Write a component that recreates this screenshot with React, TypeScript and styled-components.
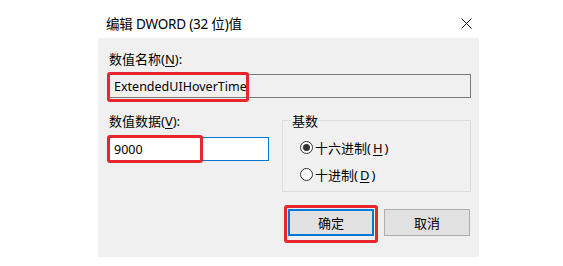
import React from "react";
import styled, { createGlobalStyle } from "styled-components";

const Global = createGlobalStyle`
  html, body { margin: 0; padding: 0; background: #ffffff; }
  body { font-family: "Noto Sans", "Noto Sans CJK SC", sans-serif; color: #000; }
`;

const Page = styled.div`
  width: 563px;
  height: 266px;
  display: flex;
  justify-content: flex-start;
  padding-left: 98px;
  box-sizing: border-box;
`;

const Dialog = styled.div`
  width: 381px;
  display: flex;
  flex-direction: column;
`;

const TitleBar = styled.div`
  height: 38px;
  display: flex;
  align-items: center;
  justify-content: space-between;
  padding: 0 7px 0 8px;
  box-sizing: border-box;
`;

const Title = styled.div`
  font-size: 13.5px;
  font-family: "Noto Sans", "Noto Sans CJK SC", sans-serif;
  margin-top: 8px;
  letter-spacing: -0.2px;
`;

const Close = styled.div`
  width: 11px;
  height: 11px;
  margin-top: 8px;
  display: flex;
`;

const Body = styled.div`
  background: #f0f0f0;
  height: 219px;
  padding: 13px 8px 0 11px;
  box-sizing: border-box;
  display: flex;
  flex-direction: column;
`;

const Label = styled.div`
  font-size: 13px;
  font-family: "Noto Sans", "Noto Sans CJK SC", sans-serif;
  line-height: 17px;
  height: 17px;
  color: #000;
`;

const Hot = styled.u`
  text-underline-offset: 2px;
`;

const Field = styled.div<{ $w: number; $h: number; $active?: boolean }>`
  position: relative;
  width: ${(p) => p.$w}px;
  height: ${(p) => p.$h}px;
  box-sizing: border-box;
  border: 1px solid ${(p) => (p.$active ? "#0078d7" : "#7a7a7a")};
  background: ${(p) => (p.$active ? "#ffffff" : "#f0f0f0")};
  display: flex;
  align-items: center;
  padding-left: 4px;
  font-size: 12.5px;
  font-family: "Noto Sans", sans-serif;
`;

const Mark = styled.div<{ $l: number; $t: number; $w: number; $h: number }>`
  position: absolute;
  left: ${(p) => p.$l}px;
  top: ${(p) => p.$t}px;
  width: ${(p) => p.$w}px;
  height: ${(p) => p.$h}px;
  border: 3px solid #e8262b;
  border-radius: 3px;
  box-sizing: border-box;
  pointer-events: none;
`;

const Row = styled.div`
  display: flex;
  margin-top: 14px;
`;

const LeftCol = styled.div`
  display: flex;
  flex-direction: column;
  gap: 7px;
  width: 173px;
  padding-top: 1px;
`;

const Group = styled.fieldset`
  margin: 1px 0 0 0;
  padding: 11px 0 0 17px;
  width: 189px;
  height: 79px;
  box-sizing: border-box;
  border: 1px solid #dcdcdc;
  border-radius: 0;
  display: flex;
  flex-direction: column;
  gap: 10px;
`;

const Legend = styled.legend`
  font-size: 13px;
  font-family: "Noto Sans CJK SC", sans-serif;
  padding: 0 1px;
  margin-left: -9px;
  line-height: 15px;
`;

const RadioRow = styled.div`
  display: flex;
  align-items: center;
  gap: 2px;
  height: 17px;
  font-size: 13px;
  font-family: "Noto Sans", "Noto Sans CJK SC", sans-serif;
`;

const Radio = styled.span<{ $on?: boolean }>`
  width: 13px;
  height: 13px;
  box-sizing: border-box;
  border: 1px solid #333;
  border-radius: 50%;
  background: #fff;
  display: flex;
  align-items: center;
  justify-content: center;
  &::after {
    content: "";
    width: 7px;
    height: 7px;
    border-radius: 50%;
    background: ${(p) => (p.$on ? "#333" : "transparent")};
  }
`;

const Buttons = styled.div`
  display: flex;
  justify-content: flex-end;
  gap: 10px;
  margin-top: 17px;
  padding-right: 1px;
`;

const Button = styled.div<{ $default?: boolean }>`
  position: relative;
  width: 86px;
  height: 27px;
  box-sizing: border-box;
  background: #e1e1e1;
  border: ${(p) => (p.$default ? "2px solid #0078d7" : "1px solid #adadad")};
  display: flex;
  align-items: center;
  justify-content: center;
  font-size: 13px;
  font-family: "Noto Sans CJK SC", sans-serif;
`;

export default function App() {
  return (
    <>
      <Global />
      <Page>
        <Dialog>
          <TitleBar>
            <Title>编辑 DWORD (32 位)值</Title>
            <Close>
              <svg width="11" height="11" viewBox="0 0 11 11">
                <path d="M0.5 0.5 L10.5 10.5 M10.5 0.5 L0.5 10.5" stroke="#111" strokeWidth="1" fill="none" />
              </svg>
            </Close>
          </TitleBar>
          <Body>
            <Label>
              数值名称(<Hot>N</Hot>):
            </Label>
            <Field $w={362} $h={24} style={{ marginTop: 6 }}>
              ExtendedUIHoverTime
              <Mark $l={-3} $t={-3} $w={142} $h={30} />
            </Field>
            <Row>
              <LeftCol>
                <Label>
                  数值数据(<Hot>V</Hot>):
                </Label>
                <Field $w={160} $h={24} $active>
                  9000
                  <Mark $l={-3} $t={-3} $w={96} $h={28} />
                </Field>
              </LeftCol>
              <Group>
                <Legend>基数</Legend>
                <RadioRow>
                  <Radio $on />
                  十六进制(<Hot>H</Hot>)
                </RadioRow>
                <RadioRow>
                  <Radio />
                  十进制(<Hot>D</Hot>)
                </RadioRow>
              </Group>
            </Row>
            <Buttons>
              <Button $default>
                确定
                <Mark $l={-6} $t={-6} $w={94} $h={38} />
              </Button>
              <Button>取消</Button>
            </Buttons>
          </Body>
        </Dialog>
      </Page>
    </>
  );
}
